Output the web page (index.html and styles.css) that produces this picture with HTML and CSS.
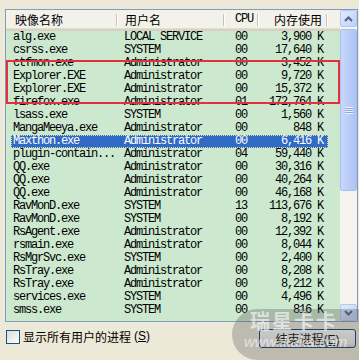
FILE: index.html
```html
<!DOCTYPE html>
<html>
<head>
    <meta charset="utf-8">
    <title>进程</title>
    <link rel="stylesheet" href="styles.css">
</head>
<body>
    <div class="window">
        <div class="list">
            <div class="table">
                <div class="head">
                    <div class="hcell c1">映像名称</div>
                    <div class="hcell c2">用户名</div>
                    <div class="hcell c3">CPU</div>
                    <div class="hcell c4">内存使用</div>
                    <div class="hcell c5"></div>
                </div>
                <div class="rows">
                    <div class="row"><span>alg.exe</span><span>LOCAL SERVICE</span><span>00</span><span class="mem">3,900 K</span></div>
                    <div class="row"><span>csrss.exe</span><span>SYSTEM</span><span>00</span><span class="mem">17,640 K</span></div>
                    <div class="row"><span>ctfmon.exe</span><span>Administrator</span><span>00</span><span class="mem">3,452 K</span></div>
                    <div class="row"><span>Explorer.EXE</span><span>Administrator</span><span>00</span><span class="mem">9,720 K</span></div>
                    <div class="row"><span>Explorer.EXE</span><span>Administrator</span><span>00</span><span class="mem">15,372 K</span></div>
                    <div class="row"><span>firefox.exe</span><span>Administrator</span><span>01</span><span class="mem">172,764 K</span></div>
                    <div class="row"><span>lsass.exe</span><span>SYSTEM</span><span>00</span><span class="mem">1,560 K</span></div>
                    <div class="row"><span>MangaMeeya.exe</span><span>Administrator</span><span>00</span><span class="mem">848 K</span></div>
                    <div class="row selected"><span>Maxthon.exe</span><span>Administrator</span><span>00</span><span class="mem">6,416 K</span></div>
                    <div class="row"><span>plugin-contain...</span><span>Administrator</span><span>04</span><span class="mem">59,440 K</span></div>
                    <div class="row"><span>QQ.exe</span><span>Administrator</span><span>00</span><span class="mem">30,316 K</span></div>
                    <div class="row"><span>QQ.exe</span><span>Administrator</span><span>00</span><span class="mem">40,264 K</span></div>
                    <div class="row"><span>QQ.exe</span><span>Administrator</span><span>00</span><span class="mem">46,168 K</span></div>
                    <div class="row"><span>RavMonD.exe</span><span>SYSTEM</span><span>13</span><span class="mem">113,676 K</span></div>
                    <div class="row"><span>RavMonD.exe</span><span>SYSTEM</span><span>00</span><span class="mem">8,192 K</span></div>
                    <div class="row"><span>RsAgent.exe</span><span>Administrator</span><span>00</span><span class="mem">12,392 K</span></div>
                    <div class="row"><span>rsmain.exe</span><span>Administrator</span><span>00</span><span class="mem">8,044 K</span></div>
                    <div class="row"><span>RsMgrSvc.exe</span><span>SYSTEM</span><span>00</span><span class="mem">2,400 K</span></div>
                    <div class="row"><span>RsTray.exe</span><span>Administrator</span><span>00</span><span class="mem">8,208 K</span></div>
                    <div class="row"><span>RsTray.exe</span><span>Administrator</span><span>00</span><span class="mem">8,212 K</span></div>
                    <div class="row"><span>services.exe</span><span>SYSTEM</span><span>00</span><span class="mem">4,496 K</span></div>
                    <div class="row"><span>smss.exe</span><span>SYSTEM</span><span>00</span><span class="mem">816 K</span></div>
                </div>
            </div>
            <div class="scrollbar">
                <div class="sbtn">
                    <svg width="9" height="6" viewBox="0 0 9 6"><path d="M1 5 L4.5 1.5 L8 5" fill="none" stroke="#4d6185" stroke-width="2"/></svg>
                </div>
                <div class="track">
                    <div class="thumb">
                        <div class="grip"></div>
                    </div>
                </div>
                <div class="sbtn">
                    <svg width="9" height="6" viewBox="0 0 9 6"><path d="M1 1 L4.5 4.5 L8 1" fill="none" stroke="#4d6185" stroke-width="2"/></svg>
                </div>
            </div>
        </div>

        <div class="footer">
            <label class="check"><span class="box"></span>显示所有用户的进程 <span class="key">(<u>S</u>)</span></label>
            <div class="button">结束进程<span class="key">(<u>E</u>)</span></div>
        </div>
    </div>

    <!-- annotation + watermark overlays -->
    <div class="mark"></div>
    <div class="watermark">
        <div class="wm-big">瑞星卡卡</div>
        <div class="wm-url">www.ikaka.com</div>
    </div>
</body>
</html>
```

FILE: styles.css
```css
* {
    margin: 0;
    padding: 0;
    box-sizing: border-box;
}

body {
    width: 359px;
    height: 360px;
    overflow: hidden;
    background: #ece9d8;
    font-family: "Noto Sans CJK SC", "Liberation Sans", sans-serif;
    font-size: 12px;
    color: #000;
    position: relative;
}

.window {
    padding: 9px 1px 0 5px;
}

/* list view */
.list {
    display: flex;
    width: 353px;
    height: 313px;
    border: 1px solid #7f9db9;
    background: #cce8cf;
    overflow: hidden;
}

.table {
    width: 334px;
    display: flex;
    flex-direction: column;
}

.head {
    display: flex;
    height: 21px;
    flex: none;
    background: #f3f2ea;
    border-bottom: 2px solid #d6d2c2;
    box-shadow: inset 0 -1px 0 #e2dfd0;
}

.hcell {
    height: 19px;
    line-height: 19px;
    white-space: nowrap;
    position: relative;
}

.hcell::after {
    content: "";
    position: absolute;
    right: 0;
    top: 4px;
    height: 12px;
    width: 1px;
    background: #c7c5b2;
    box-shadow: 1px 0 0 #fff;
}

.hcell.c5::after {
    display: none;
}

.c1 { width: 111px; padding-left: 9px; }
.c2 { width: 107px; padding-left: 8px; }
.c3 { width: 34px; padding-left: 11px; font-family: "Liberation Mono", monospace; letter-spacing: -1.2px; }
.c4 { width: 69px; padding-right: 5px; text-align: right; }
.c5 { width: 13px; }

.rows {
    font-family: "Liberation Mono", "DejaVu Sans Mono", monospace;
    font-size: 12px;
    letter-spacing: -1.2px;
}

.row {
    display: grid;
    grid-template-columns: 106px 107px 34px 69px;
    width: 317px;
    height: 13px;
    line-height: 13px;
    margin-left: 5px;
    white-space: nowrap;
}

.row span:nth-child(1) { padding-left: 2px; }
.row span:nth-child(2) { padding-left: 7px; }
.row span:nth-child(3) { padding-left: 11px; }
.row span.mem { text-align: right; padding-right: 4px; }

.row.selected {
    background: #316ac5;
    color: #fff;
    outline: 1px dotted #d6dcb0;
    outline-offset: -1px;
}

/* XP scrollbar */
.scrollbar {
    width: 17px;
    display: flex;
    flex-direction: column;
    background: #f3f2ec;
}

.sbtn {
    height: 17px;
    flex: none;
    display: flex;
    align-items: center;
    justify-content: center;
    border: 1px solid #b5c8f3;
    border-radius: 2px;
    background: linear-gradient(135deg, #e2ebfe, #bcd0f8);
}

.track {
    flex: 1;
    padding-top: 2px;
    background: #f5f4ef;
}

.thumb {
    height: 162px;
    border: 1px solid #a8bff0;
    border-radius: 2px;
    background: linear-gradient(90deg, #c9d8fc, #b7cbf7 60%, #aec4f4);
    display: flex;
    align-items: center;
    justify-content: center;
}

.grip {
    width: 8px;
    height: 7px;
    background: repeating-linear-gradient(180deg, #eef3fe 0 1px, #8ca6dc 1px 2px);
}

/* footer */
.footer {
    display: flex;
    justify-content: space-between;
    align-items: flex-start;
    padding-top: 7px;
}

.check {
    display: flex;
    align-items: center;
    gap: 3px;
    height: 15px;
    line-height: 15px;
    padding-left: 1px;
}

.box {
    width: 14px;
    height: 14px;
    border: 1px solid #1c5180;
    background: linear-gradient(135deg, #dcdcd7, #fff);
}

.key {
    font-family: "Liberation Sans", sans-serif;
    font-size: 12px;
}

.button {
    width: 97px;
    height: 19px;
    margin-right: 2px;
    border: 1px solid #003c74;
    border-radius: 3px;
    background: linear-gradient(180deg, #fff, #ecebe6 80%, #d6d0c5);
    line-height: 17px;
    text-align: center;
}

/* red annotation */
.mark {
    position: absolute;
    left: 6px;
    top: 60px;
    width: 334px;
    height: 44px;
    border: 2px solid #e3303a;
}

/* watermark */
.watermark {
    position: absolute;
    left: 232px;
    top: 309px;
    width: 127px;
    height: 51px;
    background: rgba(90, 90, 90, 0.32);
    border-radius: 28px 0 0 28px;
    color: rgba(255, 255, 255, 0.6);
    padding-left: 18px;
    pointer-events: none;
}

.wm-big {
    font-size: 20px;
    font-weight: bold;
    line-height: 24px;
    letter-spacing: 2px;
}

.wm-url {
    font-family: "Liberation Sans", sans-serif;
    font-style: italic;
    font-size: 15px;
    line-height: 18px;
    margin-left: -6px;
}
```
